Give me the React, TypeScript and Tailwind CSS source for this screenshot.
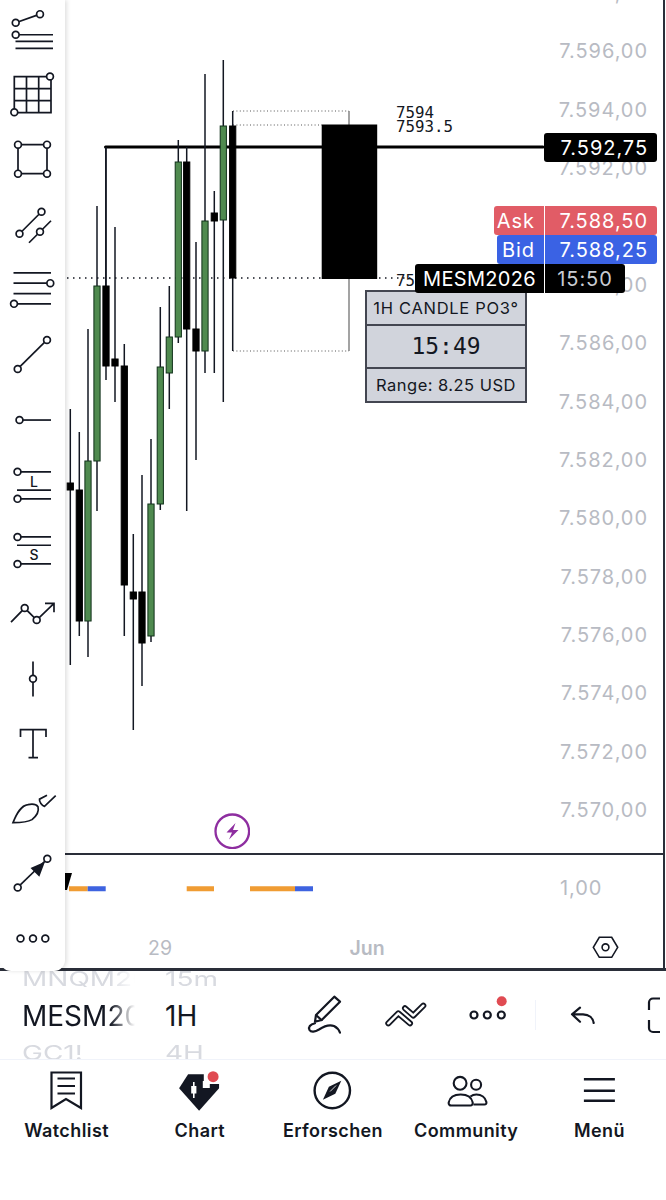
import React from "react";

const INK = "#131722";

type C = { x: number; wt: number; wb: number; t: number; b: number; g?: boolean };
const candles: C[] = [
  { x: 70.3, wt: 409, wb: 665, t: 483, b: 490 },
  { x: 79.3, wt: 432, wb: 636, t: 490, b: 621 },
  { x: 88, wt: 329, wb: 657, t: 461, b: 621, g: true },
  { x: 97, wt: 206, wb: 511, t: 286, b: 461, g: true },
  { x: 106, wt: 147, wb: 380, t: 286, b: 366 },
  { x: 115, wt: 227, wb: 402, t: 359, b: 366 },
  { x: 124.3, wt: 344, wb: 636, t: 366, b: 585 },
  { x: 133.3, wt: 534, wb: 730, t: 592, b: 599 },
  { x: 142, wt: 475, wb: 686, t: 592, b: 643 },
  { x: 151, wt: 439, wb: 642, t: 504, b: 636, g: true },
  { x: 160.3, wt: 307, wb: 510, t: 367, b: 504, g: true },
  { x: 169.3, wt: 286, wb: 409, t: 337, b: 373, g: true },
  { x: 178.3, wt: 140, wb: 343, t: 162, b: 337, g: true },
  { x: 186.7, wt: 147, wb: 511, t: 162, b: 329 },
  { x: 196, wt: 242, wb: 460, t: 329, b: 351 },
  { x: 205, wt: 74, wb: 373, t: 221, b: 351, g: true },
  { x: 214.3, wt: 191, wb: 373, t: 213, b: 221 },
  { x: 223.3, wt: 60, wb: 402, t: 126, b: 220, g: true },
  { x: 232.7, wt: 111, wb: 351, t: 126, b: 278 },
];

const rows = [
  "7.598,00", "7.596,00", "7.594,00", "7.592,00", "7.590,00", "7.588,00",
  "7.586,00", "7.584,00", "7.582,00", "7.580,00", "7.578,00", "7.576,00", "7.574,00", "7.572,00", "7.570,00",
];

const Ring = ({ cx, cy, r = 3.4 }: { cx: number; cy: number; r?: number }) => (
  <circle cx={cx} cy={cy} r={r} fill="#fff" />
);

const tools: React.ReactNode[] = [
  <>
    <path d="M15.7 22.3L40 13.7M19 34.3H53M15.5 41H53M15.5 48H53" />
    <Ring cx={40} cy={13.7} /><Ring cx={15.7} cy={22.3} /><Ring cx={15.7} cy={34.3} />
  </>,
  <>
    <path d="M14.3 77H51V113H14.3ZM26.5 77V113M38.7 77V113M14.3 89H51M14.3 101H51" />
    <Ring cx={50} cy={77} /><Ring cx={14.3} cy={112.7} />
  </>,
  <>
    <path d="M18 145H47V174H18Z" />
    <Ring cx={18} cy={145} /><Ring cx={47} cy={145} /><Ring cx={47} cy={174} /><Ring cx={18} cy={174} />
  </>,
  <>
    <path d="M19.5 234L41.5 212M29 243L51 221" />
    <Ring cx={41.5} cy={212} /><Ring cx={19.5} cy={234} /><Ring cx={40} cy={232} />
  </>,
  <>
    <path d="M13.5 273H51M13.5 283.3H47M13.5 293.7H51M17.5 304H51" />
    <Ring cx={50.3} cy={283.3} /><Ring cx={14} cy={304} />
  </>,
  <>
    <path d="M17.7 369L47 340" />
    <Ring cx={47} cy={340} /><Ring cx={17.7} cy={369} />
  </>,
  <>
    <path d="M19.5 420H51" />
    <Ring cx={19.5} cy={420} />
  </>,
  <>
    <path d="M17.5 471.7H51M17 490H51M17.5 498.7H51" />
    <Ring cx={17.5} cy={471.7} /><Ring cx={17.5} cy={498.7} />
    <text x={34} y={486.6} textAnchor="middle" fontSize={14} fontWeight={500} fill={INK} stroke="none" fontFamily="Inter, sans-serif">L</text>
  </>,
  <>
    <path d="M17.5 536.7H51M17 545H51M17.5 563.7H51" />
    <Ring cx={17.5} cy={536.7} /><Ring cx={17.5} cy={563.7} />
    <text x={34} y={559.5} textAnchor="middle" fontSize={14} fontWeight={500} fill={INK} stroke="none" fontFamily="Inter, sans-serif">S</text>
  </>,
  <>
    <path d="M11 621.7L24.7 607.7L36.7 619.7L54 603M45 603H54V612" />
    <Ring cx={24.7} cy={607.7} /><Ring cx={36.7} cy={619.7} />
  </>,
  <>
    <path d="M33 662V697" />
    <Ring cx={33} cy={679.3} />
  </>,
  <path d="M20.5 737.5V730H46V737.5M33 730V758M28.5 758H38" />,
  <>
    <path d="M13 823C17 813 21 806 28 805C33 804 36.5 805 38 807C39 811 37 816 32 820C27 823 21 823 13 823Z" />
    <path d="M47 795.5L39.5 799.5C39 802 42 806 44.5 806.7L55.7 796" />
  </>,
  <>
    <path d="M17.7 887.7L47.3 859" />
    <path d="M43.5 863.5L32 868.5L39 875.5Z" fill={INK} />
    <Ring cx={47.3} cy={859} /><Ring cx={17.7} cy={887.7} />
  </>,
  <>
    <Ring cx={20.5} cy={938.7} /><Ring cx={33} cy={938.7} /><Ring cx={45.3} cy={938.7} />
  </>,
];

function Sidebar() {
  return (
    <div className="relative z-20 flex h-[971px] w-[65px] shrink-0 flex-col overflow-hidden rounded-b-[11px] bg-white shadow-[2px_0_4px_rgba(0,0,0,0.12)]">
      <div className="-mt-[2.45px] flex flex-col">
        {tools.map((t, i) => {
          const c = 30 + i * 64.9;
          return (
            <svg
              key={i}
              viewBox={`0 ${c - 32.45} 65 64.9`}
              className="block h-[64.9px] w-[65px] shrink-0"
              fill="none"
              stroke={INK}
              strokeWidth={1.7}
            >
              {t}
            </svg>
          );
        })}
      </div>
    </div>
  );
}

function ChartSvg() {
  return (
    <svg viewBox="65 0 480 853" className="block h-[853px] w-[480px] shrink-0">
      <path d="M67 278H415" stroke={INK} strokeWidth={1.5} strokeDasharray="1.5 4.5" />
      <path d="M233 111H349M233 125H322M233 351H349" stroke="#555" strokeWidth={1} strokeDasharray="1 2.4" />
      <path d="M349 111V351" stroke="#666" strokeWidth={1.2} />
      <path d="M105.8 147V286" stroke={INK} strokeWidth={1.5} />
      <path d="M105.5 147H543" stroke="#000" strokeWidth={3} strokeLinecap="round" />
      {candles.map((c, i) => (
        <g key={i}>
          <path d={`M${c.x} ${c.wt}V${c.wb}`} stroke={INK} strokeWidth={1.5} />
          <rect
            x={c.x - 3.1}
            y={c.t}
            width={6.2}
            height={c.b - c.t}
            fill={c.g ? "#4f8a4f" : "#000"}
            stroke={c.g ? "#10301a" : "#000"}
            strokeWidth={1}
          />
        </g>
      ))}
      <rect x={321.7} y={124.5} width={55.5} height={154.5} fill="#000" />
    </svg>
  );
}

function PriceAxis() {
  return (
    <div className="flex h-[853px] flex-1 flex-col items-end overflow-hidden pr-[15px] text-[20px] tracking-[0.95px] text-[#b8bbc3]">
      <div className="-mt-[36.4px] flex flex-col items-end">
        {rows.map((p, i) => (
          <div key={i} className="flex h-[58.4px] items-center">{p}</div>
        ))}
      </div>
    </div>
  );
}

function Tag({ left, right, bg, lw, rw }: { left?: string; right: string; bg: string; lw: string; rw: string }) {
  return (
    <div className={`flex h-[29px] ${bg} rounded-[3px] pt-px text-[20px] tracking-[0.95px] text-white`}>
      <div className={`${lw} flex items-center justify-end pr-[9px]`}>{left}</div>
      <div className={`${rw} -mt-px flex items-center justify-end border-l border-white pr-[9px] pt-px`}>{right}</div>
    </div>
  );
}

function Overlays() {
  return (
    <>
      <div className="absolute left-[331px] top-[106px] font-['DejaVu_Sans_Mono',monospace] text-[15.8px] leading-[14px] text-[#131722]">
        <div>7594</div>
        <div>7593.5</div>
      </div>
      <div className="absolute left-[331px] top-[273px] font-['DejaVu_Sans_Mono',monospace] text-[15.8px] leading-[16px] text-[#131722]">75</div>
      <div className="absolute left-[479px] top-[133px] flex h-[29px] w-[113px] items-center justify-end rounded-[3px] bg-black pr-[9px] pt-px text-[20px] tracking-[0.95px] text-white">7.592,75</div>
      <div className="absolute left-[300px] top-[290px] w-[162px] border-2 border-[#434651] bg-[#d1d4dc] text-center text-[#131722]">
        <div className="flex h-[32px] items-center justify-center text-[16.5px] tracking-[0.7px]">1H CANDLE PO3°</div>
        <div className="flex h-[45px] items-center justify-center border-y-2 border-[#434651] font-['DejaVu_Sans_Mono',monospace] text-[23px]">15:49</div>
        <div className="flex h-[32px] items-center justify-center text-[16.5px] tracking-[0.47px]">Range: 8.25 USD</div>
      </div>
      <div className="absolute right-[6px] top-[206px] flex flex-col items-end">
        <Tag left="Ask" right="7.588,50" bg="bg-[#e15c66]" lw="w-[50px]" rw="w-[113px]" />
        <Tag left="Bid" right="7.588,25" bg="bg-[#3a62e4]" lw="w-[47px]" rw="w-[113px]" />
      </div>
      <div className="absolute left-[350px] top-[264px] flex h-[29px] rounded-[3px] bg-black text-[20px] text-white">
        <div className="flex w-[129px] items-center justify-center pt-px tracking-[0.3px]">MESM2026</div>
        <div className="flex w-[81px] items-center justify-center border-l border-white pt-px tracking-[0.9px] text-[#c9ccd2]">15:50</div>
      </div>
    </>
  );
}

function BottomPane() {
  return (
    <div className="flex h-[64px] border-t-2 border-[#2a2e39]">
      <svg viewBox="65 855 480 64" className="block h-[64px] w-[480px] shrink-0">
        <path d="M65 873H72L67 890H65Z" fill="#000" />
        <path d="M69 888.7H87.7M186.7 888.7H214M250 888.7H295" stroke="#f09c33" strokeWidth={5} />
        <path d="M87.7 888.7H105.7M295 888.7H313" stroke="#3e63e0" strokeWidth={5} />
      </svg>
      <div className="flex flex-1 items-center justify-start pl-[15px] pt-[4px] text-[20px] tracking-[0.95px] text-[#b8bbc3]">1,00</div>
    </div>
  );
}

function TimeAxis() {
  return (
    <div className="flex flex-1 items-end pb-[4px] text-[19.5px] text-[#b8bbc3]">
      <div className="ml-[75px] flex h-[30px] w-[40px] items-center justify-center">29</div>
      <div className="ml-[167px] flex h-[30px] w-[40px] items-center justify-center font-semibold">Jun</div>
      <svg viewBox="590 934 31 30" className="ml-[203px] h-[30px] w-[31px]" fill="none" stroke={INK} strokeWidth={1.6}>
        <path d="M593.3 947.3L599.3 937.3H611.7L617.7 947.3L611.7 957.3H599.3Z" />
        <circle cx={605.5} cy={947.3} r={3.4} />
      </svg>
    </div>
  );
}

function Toolbar() {
  const svg = "block h-[88px] shrink-0";
  const fadeRow = "flex overflow-hidden text-[#d8dae0]";
  return (
    <div className="flex h-[88px] items-stretch">
      <div className="ml-[22px] flex w-[113px] flex-col gap-[12px] overflow-hidden text-[28px] leading-none [mask-image:linear-gradient(to_right,black_78%,transparent)]">
        <div className={`${fadeRow} h-[16px] items-center`}><div className="scale-y-[0.72] whitespace-nowrap">MNQM2026</div></div>
        <div className="flex h-[34px] items-center whitespace-nowrap text-[#131722]">MESM2026</div>
        <div className={`${fadeRow} h-[14px] items-start`}><div className="-mt-[2px] origin-top scale-y-[0.72] whitespace-nowrap">GC1!</div></div>
      </div>
      <div className="ml-[30px] flex w-[60px] flex-col gap-[12px] overflow-hidden text-[28px] leading-none">
        <div className={`${fadeRow} h-[16px] items-center`}><div className="scale-y-[0.72]">15m</div></div>
        <div className="flex h-[34px] items-center text-[#131722]">1H</div>
        <div className={`${fadeRow} h-[14px] items-start`}><div className="-mt-[2px] origin-top scale-y-[0.72]">4H</div></div>
      </div>
      <svg viewBox="295 971 60 88" className={`${svg} ml-[70px] w-[60px]`} fill="none" stroke={INK} strokeWidth={2.2} strokeLinecap="round" strokeLinejoin="round">
        <path d="M334.3 996.7L340 1001.7L321.7 1020L315 1021.7L316 1015Z" />
        <path d="M316.5 1015.5L321.5 1020" />
        <path d="M315 1023.3C310 1024.5 308 1027 309.5 1030C311 1032.5 315 1032 319 1029.5C325 1025.5 330 1024.5 334 1026C337 1027.5 339 1030 340 1032.7" />
      </svg>
      <svg viewBox="380 971 50 88" className={`${svg} ml-[25px] w-[50px]`} fill="none" strokeLinecap="round" strokeLinejoin="round">
        <path d="M388.3 1023.3L398.3 1013.3L410 1023.3M405 1008.3L413.3 1015.5L423.3 1005.7" stroke={INK} strokeWidth={6} />
        <path d="M388.3 1023.3L398.3 1013.3L410 1023.3M405 1008.3L413.3 1015.5L423.3 1005.7" stroke="#fff" strokeWidth={2.4} />
      </svg>
      <svg viewBox="462 971 52 88" className={`${svg} ml-[32px] w-[52px]`} fill="none" stroke={INK} strokeWidth={2.2}>
        <circle cx={474} cy={1015} r={3.5} />
        <circle cx={487.3} cy={1015} r={3.5} />
        <circle cx={501.3} cy={1015} r={3.5} />
        <circle cx={501.7} cy={1001.3} r={5} fill="#e04b52" stroke="none" />
      </svg>
      <div className="ml-[21px] mt-[29px] h-[30px] w-px shrink-0 bg-[#f0f3fa]" />
      <svg viewBox="565 971 36 88" className={`${svg} ml-[28px] w-[36px]`} fill="none" stroke={INK} strokeWidth={2.2} strokeLinecap="round" strokeLinejoin="round">
        <path d="M581 1007.7L573 1014.3L581 1021.7M573 1014.3H584C590 1014.5 594 1018 594.7 1023" />
      </svg>
      <svg viewBox="601 971 65 88" className={`${svg} w-[65px]`} fill="none" stroke={INK} strokeWidth={2.2}>
        <path d="M661 998.5H654A4 4 0 0 0 650 1002.5V1010M650 1020V1028A4 4 0 0 0 654 1032H661" />
      </svg>
    </div>
  );
}

const tabIcons: React.ReactNode[] = [
  <>
    <path d="M51.5 1072.5H81V1108L66 1099L51.5 1108Z" fill="none" stroke={INK} strokeWidth={2.2} />
    <path d="M57.5 1078.5H75M57.5 1086H75M57.5 1093.5H75" fill="none" stroke={INK} strokeWidth={2.2} />
  </>,
  <>
    <path d="M179.3 1088.3L188.3 1074.3H219.3V1088.3L199.3 1110.7Z" fill={INK} />
    <path d="M194 1082V1098" stroke="#fff" strokeWidth={1.6} />
    <rect x={191.4} y={1086} width={5.2} height={7.5} fill="#fff" />
    <rect x={204} y={1072} width={17} height={12} fill="#fff" />
    <rect x={203} y={1081} width={7} height={7} fill="#fff" />
    <circle cx={213.3} cy={1076.7} r={5.5} fill="#e04b52" />
  </>,
  <>
    <circle cx={332.7} cy={1090.5} r={17.7} fill="none" stroke={INK} strokeWidth={2.4} />
    <path d="M323.3 1099.8L329.3 1086.7L341.7 1080.7L335.7 1093.8Z" fill={INK} />
    <path d="M330.5 1091.5L336.5 1085.5" stroke="#fff" strokeWidth={0.8} />
  </>,
  <g fill="none" stroke={INK} strokeWidth={2.1}>
    <circle cx={459.7} cy={1083.3} r={6.4} />
    <circle cx={475.7} cy={1084.7} r={5} />
    <path d="M451 1105.5H470A2.5 2.5 0 0 0 472.3 1102.5C471.3 1097.5 467.3 1094.5 460.3 1094.5C453.3 1094.5 449.3 1097.5 448.3 1102.5A2.5 2.5 0 0 0 451 1105.5Z" />
    <path d="M470 1096.5C472 1095 474 1094.5 476 1094.5C481 1094.5 485 1097.5 486 1102C486.3 1103.5 485.5 1104.5 484 1104.5H473" />
  </g>,
  <path d="M583.7 1079.3H614.7M583.7 1090.7H614.7M583.7 1100.7H614.7" fill="none" stroke={INK} strokeWidth={2.4} />,
];
const tabs = ["Watchlist", "Chart", "Erforschen", "Community", "Menü"];

function TabBar() {
  return (
    <div className="grid grid-cols-5 border-t border-[#f0f3fa]">
      {tabs.map((t, i) => (
        <div key={t} className="flex flex-col items-center">
          <svg viewBox={`${i * 133.2} 1060 133.2 56`} className="block h-[56px] w-[133.2px]">
            {tabIcons[i]}
          </svg>
          <div className="flex h-[28px] items-center text-[18px] font-semibold tracking-[0.4px] text-[#131722]">{t}</div>
        </div>
      ))}
    </div>
  );
}

export default function App() {
  return (
    <div className="h-[1200px] w-[666px] overflow-hidden bg-white font-['Inter',sans-serif]">
      <div className="flex h-[971px] border-b-[3px] border-[#2a2e39]">
        <Sidebar />
        <div className="flex w-[600px] flex-col border-r-[2px] border-[#2a2e39]">
          <div className="relative flex h-[853px]">
            <ChartSvg />
            <PriceAxis />
            <Overlays />
            <div className="pointer-events-none absolute left-[149px] top-[813px] h-[36px] w-[36px]">
              <svg viewBox="214 813 36 36" className="block h-[36px] w-[36px]" fill="none">
                <circle cx={232.3} cy={831.3} r={16.8} stroke="#8e2ea0" strokeWidth={2.3} />
                <path d="M235.5 823L226.5 832.5H232L229 839.5L238.5 830H233Z" fill="#8e2ea0" />
              </svg>
            </div>
          </div>
          <BottomPane />
          <TimeAxis />
        </div>
      </div>
      <Toolbar />
      <TabBar />
    </div>
  );
}
